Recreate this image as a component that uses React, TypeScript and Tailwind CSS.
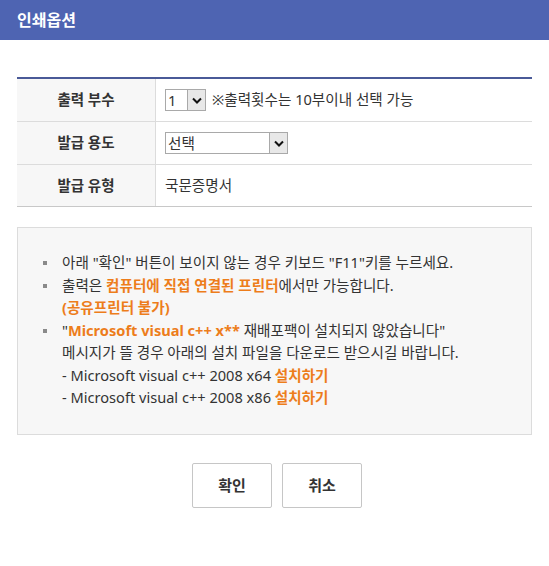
// Print options popup
const font = { fontFamily: '"Noto Sans", "Noto Sans CJK KR", sans-serif' };

const Row = ({ label, children, last }: { label: string; children: React.ReactNode; last?: boolean }) => (
  <div className={`flex ${last ? 'h-[41px]' : 'h-[43px] border-b border-[#dcdcdc]'}`}>
    <div className="w-[139px] shrink-0 flex items-center justify-center bg-[#f7f7f7] border-r border-[#dcdcdc] text-[14.5px] font-bold text-[#333]">
      {label}
    </div>
    <div className="flex items-center pl-[9px] text-[14.6px] text-[#333]">{children}</div>
  </div>
);

const SelectBox = ({ value, width }: { value: string; width: number }) => (
  <div className="flex h-[22px] border border-[#a9a9a9] bg-white" style={{ width }}>
    <span className="flex-1 pl-[2px] text-[14.6px] leading-[20px] text-[#333]">{value}</span>
    <span className="w-[18px] flex items-center justify-center bg-[#e8e8e8] border-l border-[#a9a9a9]">
      <svg width="10" height="7" viewBox="0 0 10 7">
        <path d="M1 1.5 L5 5.5 L9 1.5" fill="none" stroke="#111" strokeWidth="2" />
      </svg>
    </span>
  </div>
);

const Hl = ({ children }: { children: React.ReactNode }) => (
  <b className="text-[#ed7d1b] font-bold">{children}</b>
);

const Bullet = () => (
  <span className="w-[19px] shrink-0 flex pt-[10px]">
    <span className="w-[4px] h-[4px] bg-[#8a8a8a]" />
  </span>
);

export default function App() {
  return (
    <div className="w-[549px] h-[566px] bg-white" style={font}>
      <div className="h-[40px] bg-[#4e64b2] flex items-center pl-[17px]">
        <h1 className="text-white text-[16px] font-bold">인쇄옵션</h1>
      </div>

      <div className="mx-[17px] mt-[37px] border-t-2 border-[#4a5a98] border-b border-b-[#c8c8c8]">
        <Row label="출력 부수">
          <SelectBox value="1" width={41} />
          <span className="ml-[6px]">※출력횟수는 10부이내 선택 가능</span>
        </Row>
        <Row label="발급 용도">
          <SelectBox value="선택" width={123} />
        </Row>
        <Row label="발급 유형" last>
          국문증명서
        </Row>
      </div>

      <div className="mx-[17px] mt-[20px] h-[208px] bg-[#f7f7f7] border border-[#dcdcdc] pt-[23px] pl-[25px] text-[14.6px] text-[#333] leading-[22.5px]">
        <ul>
          <li className="flex">
            <Bullet />
            <span>아래 "확인" 버튼이 보이지 않는 경우 키보드 "F11"키를 누르세요.</span>
          </li>
          <li className="flex">
            <Bullet />
            <span>
              출력은 <Hl>컴퓨터에 직접 연결된 프린터</Hl>에서만 가능합니다.
              <br />
              <Hl>(공유프린터 불가)</Hl>
            </span>
          </li>
          <li className="flex">
            <Bullet />
            <span>
              "<Hl>Microsoft visual c++ x**</Hl> 재배포팩이 설치되지 않았습니다"
              <br />
              메시지가 뜰 경우 아래의 설치 파일을 다운로드 받으시길 바랍니다.
              <br />- Microsoft visual c++ 2008 x64 <Hl>설치하기</Hl>
              <br />- Microsoft visual c++ 2008 x86 <Hl>설치하기</Hl>
            </span>
          </li>
        </ul>
      </div>

      <div className="flex justify-center gap-[10px] mt-[28px] pl-[5px]">
        <button className="w-[80px] h-[45px] border border-[#c6c6c6] rounded-[2px] bg-white text-[15px] font-bold text-[#333]">
          확인
        </button>
        <button className="w-[80px] h-[45px] border border-[#c6c6c6] rounded-[2px] bg-white text-[15px] font-bold text-[#333]">
          취소
        </button>
      </div>
    </div>
  );
}
